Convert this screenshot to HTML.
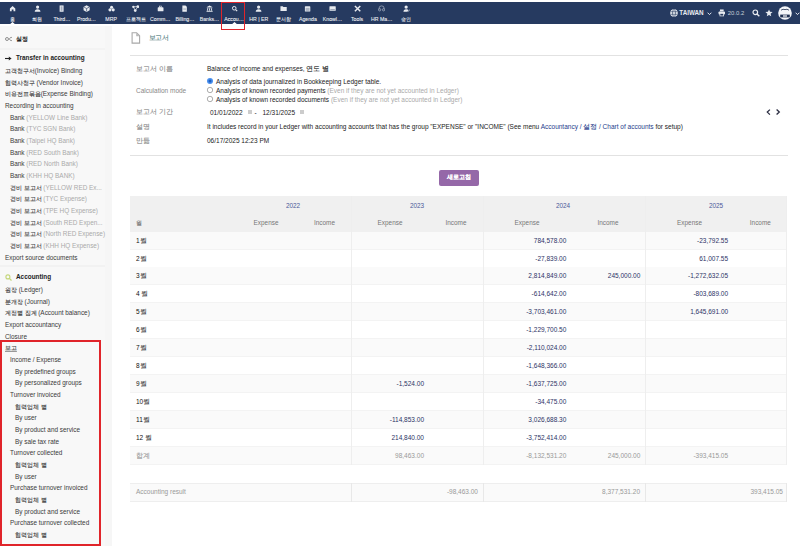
<!DOCTYPE html>
<html><head><meta charset="utf-8">
<style>
*{box-sizing:border-box;margin:0;padding:0}
html,body{width:800px;height:546px;overflow:hidden;background:#fff;font-family:"Liberation Sans",sans-serif;color:#333}
#top{position:absolute;left:0;top:2px;width:800px;height:21.8px;background:#263a60}
.mi{position:absolute;top:0;width:24.6px;height:22px;text-align:center}
.mi svg{position:absolute;left:50%;top:3.4px;margin-left:-3.6px;width:7.2px;height:7.2px}
.mi>span{position:absolute;left:-4px;right:-4px;top:13.9px;font-size:5.2px;line-height:6px;white-space:nowrap;color:#eef1f5;-webkit-text-stroke:.08px #eef1f5}
.k{font-size:1em;letter-spacing:-.01em;-webkit-text-stroke:.1px currentColor} .b .k{-webkit-text-stroke:0}
#side{position:absolute;left:0;top:26px;width:111.7px;height:520px;background:#f8f8f8}
.si{position:absolute;font-size:6.4px;line-height:8px;white-space:nowrap;color:#3a3a3a}
.si.b{font-weight:bold;color:#222}
.si .g{color:#aaa}
.ic{display:inline-block;width:11px;font-weight:normal;color:#555}
.ic2{display:inline-block;width:11px;font-size:6px;color:#9a3}
.lbl{position:absolute;left:136px;font-size:6.5px;color:#888;line-height:8px;white-space:nowrap}
.val{position:absolute;left:207px;font-size:6.5px;color:#222;line-height:8px;white-space:nowrap}
.val .g{color:#aaa}
.lnk{color:#263c8c}
.th{position:absolute;font-size:6.4px;line-height:8px;color:#777;white-space:nowrap}
.th.y{color:#4a5a9a;text-align:center}
.td{position:absolute;font-size:6.5px;line-height:8px;white-space:nowrap;color:#222}
.td.b{color:#111}
.td.n{color:#2c3366}
.td.bb{}
.td.g{color:#999}
.rad{position:absolute;left:207.5px;width:5.6px;height:5.6px;border-radius:50%;border:.6px solid #777;background:#fff}
.rad.on{border:1.6px solid #2a7ae0;background:#fff}
.btn{position:absolute;left:439px;top:170px;width:39.5px;height:15.5px;background:#9568a8;border-radius:2px;color:#fff;font-weight:bold;font-size:5.9px;line-height:15.5px;text-align:center}
</style></head><body>
<div id="side"></div><div style="position:absolute;left:104.5px;top:26px;width:7.2px;height:520px;background:#f6f6f6"></div><div style="position:absolute;left:0;top:48px;width:104.5px;height:1.5px;background:#f3f3f3"></div><div style="position:absolute;left:0;top:265.3px;width:104.5px;height:2px;background:#f2f2f2"></div>
<svg style="position:absolute;left:4.5px;top:36px" width="8" height="6" viewBox="0 0 8 6"><circle cx="2" cy="3" r="1.5" fill="none" stroke="#777" stroke-width=".8"/><path d="M7 1.6 A1.6 1.6 0 1 0 7 4.4" fill="none" stroke="#777" stroke-width=".8"/></svg>
<svg style="position:absolute;left:4.5px;top:55.5px" width="7" height="5" viewBox="0 0 7 5"><path d="M0 2.5 H4.5" stroke="#222" stroke-width="1.1"/><path d="M3.8 .6 L6.6 2.5 L3.8 4.4Z" fill="#222"/></svg>
<svg style="position:absolute;left:4.5px;top:273.5px" width="7" height="7" viewBox="0 0 7 7"><circle cx="2.9" cy="2.9" r="2" fill="none" stroke="#c4d67a" stroke-width="1.1"/><path d="M4.4 4.4 L6.5 6.5" stroke="#c4d67a" stroke-width="1.3"/></svg>
<div id="top"><div class="mi" style="left:0.40px"><svg viewBox="0 0 8 8"><path d="M1 4 L4 1 L7 4 V7 H5 V5 H3 V7 H1 Z" fill="#e8ebf0"/></svg><span><span class="k">홈</span></span></div><div class="mi" style="left:25.00px"><svg viewBox="0 0 8 8"><circle cx="4" cy="2.3" r="1.8" fill="#e8ebf0"/><path d="M0.8 7.5 Q0.8 4.6 4 4.6 Q7.2 4.6 7.2 7.5Z" fill="#e8ebf0"/></svg><span><span class="k">회원</span></span></div><div class="mi" style="left:49.60px"><svg viewBox="0 0 8 8"><rect x="1.8" y="0.5" width="4.4" height="7" fill="#e8ebf0"/><rect x="3" y="1.5" width="2" height="5" fill="#263a60" opacity=".35"/></svg><span>Third…</span></div><div class="mi" style="left:74.20px"><svg viewBox="0 0 8 8"><path d="M4 .3 L7.4 2.1 V5.9 L4 7.7 L.6 5.9 V2.1Z" fill="#e8ebf0"/><path d="M1.2 2.4 L4 3.9 L6.8 2.4 M4 3.9 V7.2" stroke="#263a60" stroke-width=".7" fill="none"/></svg><span>Produ…</span></div><div class="mi" style="left:98.80px"><svg viewBox="0 0 8 8"><circle cx="4" cy="2.4" r="1.7" fill="#e8ebf0"/><circle cx="2.2" cy="5.4" r="1.7" fill="#e8ebf0"/><circle cx="5.8" cy="5.4" r="1.7" fill="#e8ebf0"/></svg><span>MRP</span></div><div class="mi" style="left:123.40px"><svg viewBox="0 0 8 8"><circle cx="1.5" cy="2" r="1.3" fill="#e8ebf0"/><circle cx="6.5" cy="1.8" r="1.5" fill="#e8ebf0"/><circle cx="3.6" cy="6.2" r="1.5" fill="#e8ebf0"/><path d="M1.5 2 L6.5 1.8 L3.6 6.2Z" stroke="#e8ebf0" stroke-width=".8" fill="none"/></svg><span><span class="k">프로젝트</span></span></div><div class="mi" style="left:148.00px"><svg viewBox="0 0 8 8"><rect x="0.8" y="2.5" width="6.4" height="4.5" rx=".7" fill="#e8ebf0"/><rect x="2.8" y="1.2" width="2.4" height="1.6" fill="none" stroke="#e8ebf0" stroke-width=".7"/></svg><span>Comm…</span></div><div class="mi" style="left:172.60px"><svg viewBox="0 0 8 8"><path d="M1.5 0.5 H5 L6.5 2 V7.5 H1.5Z" fill="#e8ebf0"/><rect x="2.5" y="4" width="3" height="1" fill="#263a60" opacity=".4"/></svg><span>Billing…</span></div><div class="mi" style="left:197.20px"><svg viewBox="0 0 8 8"><path d="M0.5 2.5 L4 0.5 L7.5 2.5Z M1 3 H7 V3.6 H1Z M1.3 4 H2.3 V6.2 H1.3Z M3.5 4 H4.5 V6.2 H3.5Z M5.7 4 H6.7 V6.2 H5.7Z M0.6 6.5 H7.4 V7.5 H0.6Z" fill="#e8ebf0"/></svg><span>Banks…</span></div><div class="mi" style="left:221.80px"><svg viewBox="0 0 8 8"><circle cx="3.6" cy="3.6" r="2" fill="none" stroke="#e8ebf0" stroke-width="1.1"/><path d="M5.1 5.1 L6.9 6.9" stroke="#e8ebf0" stroke-width="1.3"/></svg><span>Accou…</span></div><div class="mi" style="left:246.40px"><svg viewBox="0 0 8 8"><circle cx="4" cy="2.3" r="1.8" fill="#e8ebf0"/><path d="M0.8 7.5 Q0.8 4.6 4 4.6 Q7.2 4.6 7.2 7.5Z" fill="#e8ebf0"/></svg><span>HR | ER</span></div><div class="mi" style="left:271.00px"><svg viewBox="0 0 8 8"><path d="M0.5 1.5 H3 L3.8 2.3 H7.5 V6.8 H0.5Z" fill="#e8ebf0"/></svg><span><span class="k">문서함</span></span></div><div class="mi" style="left:295.60px"><svg viewBox="0 0 8 8"><rect x="1" y="1.3" width="6" height="6" rx=".6" fill="#e8ebf0"/><rect x="1.8" y="3.2" width="4.4" height="3.4" fill="#263a60" opacity=".3"/></svg><span>Agenda</span></div><div class="mi" style="left:320.20px"><svg viewBox="0 0 8 8"><rect x="0.5" y="1.5" width="7" height="5" rx=".5" fill="#e8ebf0"/><rect x="1.5" y="4.6" width="5" height=".8" fill="#263a60" opacity=".5"/></svg><span>Knowl…</span></div><div class="mi" style="left:344.80px"><svg viewBox="0 0 8 8"><path d="M1 1 L7 7 M7 1 L1 7" stroke="#e8ebf0" stroke-width="1.6"/></svg><span>Tools</span></div><div class="mi" style="left:369.40px"><svg viewBox="0 0 8 8"><path d="M1.2 5 V3.5 Q1.2 1 4 1 Q6.8 1 6.8 3.5 V5" fill="none" stroke="#aab3c4" stroke-width=".8"/><circle cx="1.8" cy="5.3" r="1.3" fill="none" stroke="#aab3c4" stroke-width=".8"/><circle cx="6.2" cy="5.3" r="1.3" fill="none" stroke="#aab3c4" stroke-width=".8"/></svg><span>HR Ma…</span></div><div class="mi" style="left:394.00px"><svg viewBox="0 0 8 8"><circle cx="3.5" cy="2.3" r="1.8" fill="#e8ebf0"/><path d="M0.5 7.5 Q0.5 4.6 3.5 4.6 Q5.5 4.6 6 5.5 L5 7.5Z" fill="#e8ebf0"/><path d="M5 6 L6 7 L7.6 5" stroke="#e8ebf0" stroke-width=".7" fill="none"/></svg><span><span class="k">승인</span></span></div></div>
<svg style="position:absolute;left:669.8px;top:9px" width="8" height="8" viewBox="0 0 8 8"><circle cx="4" cy="4" r="3.8" fill="#e8ebf0"/><ellipse cx="4" cy="4" rx="1.5" ry="3.5" fill="none" stroke="#263a60" stroke-width=".6"/><path d="M.5 2.7 H7.5 M.5 5.3 H7.5" stroke="#263a60" stroke-width=".6"/></svg><div style="position:absolute;left:679.3px;top:9.3px;font-size:6.3px;line-height:7px;font-weight:bold;color:#e8ebf0">TAIWAN</div><svg style="position:absolute;left:706.5px;top:12px" width="5" height="3.5" viewBox="0 0 5 3.5"><path d="M.6 .7 L2.5 2.6 L4.4 .7" fill="none" stroke="#e8ebf0" stroke-width="1"/></svg><svg style="position:absolute;left:717.5px;top:9.2px" width="7.6" height="7.4" viewBox="0 0 8 8"><rect x="2" y=".5" width="4" height="2" fill="#e8ebf0"/><rect x=".5" y="2.8" width="7" height="3.2" rx=".8" fill="#e8ebf0"/><rect x="2" y="4.8" width="4" height="2.7" fill="#263a60" stroke="#e8ebf0" stroke-width=".8"/></svg><div style="position:absolute;left:727.8px;top:9.6px;font-size:5.9px;line-height:7px;color:#c9cfd9">20.0.2</div><svg style="position:absolute;left:751.5px;top:8.5px" width="8" height="8" viewBox="0 0 8 8"><circle cx="3.3" cy="3.3" r="2.3" fill="none" stroke="#e8ebf0" stroke-width="1.2"/><path d="M5 5 L7.3 7.3" stroke="#e8ebf0" stroke-width="1.4"/></svg><svg style="position:absolute;left:764.5px;top:8.5px" width="8" height="8" viewBox="0 0 10 10"><path d="M5 .5 L6.3 3.5 L9.5 3.7 L7 5.8 L7.8 9.2 L5 7.4 L2.2 9.2 L3 5.8 L.5 3.7 L3.7 3.5Z" fill="#e8ebf0"/></svg><svg style="position:absolute;left:778px;top:6.2px" width="14" height="14" viewBox="0 0 14 14"><circle cx="7" cy="7" r="6.8" fill="#f4f6f9"/><path d="M3 4.2 Q5 2.6 7 3.6 Q9 2.6 11 4.2" fill="none" stroke="#4a5670" stroke-width="1"/><rect x="2.2" y="8.6" width="9.6" height="2.8" fill="#1e2f50"/><rect x="5" y="9.4" width="4" height="1.2" fill="#fff"/></svg><svg style="position:absolute;left:795px;top:11.8px" width="5" height="3.5" viewBox="0 0 5 3.5"><path d="M.6 .7 L2.5 2.6 L4.4 .7" fill="none" stroke="#e8ebf0" stroke-width="1"/></svg>
<svg style="position:absolute;left:10px;top:21.8px" width="5" height="2.2" viewBox="0 0 5 2.2"><path d="M0 2.2 L2.5 0 L5 2.2Z" fill="#fff"/></svg>
<svg style="position:absolute;left:231.5px;top:21.8px" width="5" height="2.2" viewBox="0 0 5 2.2"><path d="M0 2.2 L2.5 0 L5 2.2Z" fill="#fff"/></svg>
<div style="position:absolute;left:220.6px;top:2.1px;width:24.7px;height:27.7px;border:1.7px solid #e0242a"></div>
<div style="position:absolute;left:0;top:0"><div class="si b" style="left:5px;top:35.0px"><span class="ic"></span><span class="k">설정</span></div><div class="si b" style="left:5px;top:54.0px"><span class="ic"></span>Transfer in accounting</div><div class="si" style="left:5px;top:66.9px"><span class="k">고객청구서</span>(Invoice) Binding</div><div class="si" style="left:5px;top:78.6px"><span class="k">협력사청구</span> (Vendor Invoice)</div><div class="si" style="left:5px;top:90.2px"><span class="k">비용전표묶음</span>(Expense Binding)</div><div class="si" style="left:5px;top:101.9px">Recording in accounting</div><div class="si" style="left:10px;top:113.6px">Bank <span class="g">(YELLOW Line Bank)</span></div><div class="si" style="left:10px;top:125.3px">Bank <span class="g">(TYC SGN Bank)</span></div><div class="si" style="left:10px;top:137.0px">Bank <span class="g">(Taipei HQ Bank)</span></div><div class="si" style="left:10px;top:148.6px">Bank <span class="g">(RED South Bank)</span></div><div class="si" style="left:10px;top:160.3px">Bank <span class="g">(RED North Bank)</span></div><div class="si" style="left:10px;top:172.0px">Bank <span class="g">(KHH HQ BANK)</span></div><div class="si" style="left:10px;top:183.7px"><span class="k">경비</span> <span class="k">보고서</span> <span class="g">(YELLOW RED Ex...</span></div><div class="si" style="left:10px;top:195.3px"><span class="k">경비</span> <span class="k">보고서</span> <span class="g">(TYC Expense)</span></div><div class="si" style="left:10px;top:207.0px"><span class="k">경비</span> <span class="k">보고서</span> <span class="g">(TPE HQ Expense)</span></div><div class="si" style="left:10px;top:218.7px"><span class="k">경비</span> <span class="k">보고서</span> <span class="g">(South RED Expen...</span></div><div class="si" style="left:10px;top:230.4px"><span class="k">경비</span> <span class="k">보고서</span> <span class="g">(North RED Expense)</span></div><div class="si" style="left:10px;top:242.0px"><span class="k">경비</span> <span class="k">보고서</span> <span class="g">(KHH HQ Expense)</span></div><div class="si" style="left:5px;top:253.7px">Export source documents</div><div class="si b" style="left:5px;top:273.0px"><span class="ic"></span>Accounting</div><div class="si" style="left:5px;top:285.9px"><span class="k">원장</span> (Ledger)</div><div class="si" style="left:5px;top:297.6px"><span class="k">분개장</span> (Journal)</div><div class="si" style="left:5px;top:309.2px"><span class="k">계정별</span> <span class="k">집계</span> (Account balance)</div><div class="si" style="left:5px;top:320.9px">Export accountancy</div><div class="si" style="left:5px;top:332.6px">Closure</div><div class="si" style="left:5px;top:344.3px"><u style="text-decoration-color:#999;text-decoration-thickness:.5px"><span class="k">보고</span></u></div><div class="si" style="left:10px;top:355.9px">Income / Expense</div><div class="si" style="left:15px;top:367.6px">By predefined groups</div><div class="si" style="left:15px;top:379.3px">By personalized groups</div><div class="si" style="left:10px;top:390.9px">Turnover invoiced</div><div class="si" style="left:15px;top:402.6px"><span class="k">협력업체</span> <span class="k">별</span></div><div class="si" style="left:15px;top:414.3px">By user</div><div class="si" style="left:15px;top:425.9px">By product and service</div><div class="si" style="left:15px;top:437.6px">By sale tax rate</div><div class="si" style="left:10px;top:449.3px">Turnover collected</div><div class="si" style="left:15px;top:461.0px"><span class="k">협력업체</span> <span class="k">별</span></div><div class="si" style="left:15px;top:472.6px">By user</div><div class="si" style="left:10px;top:484.3px">Purchase turnover invoiced</div><div class="si" style="left:15px;top:496.0px"><span class="k">협력업체</span> <span class="k">별</span></div><div class="si" style="left:15px;top:507.6px">By product and service</div><div class="si" style="left:10px;top:519.3px">Purchase turnover collected</div><div class="si" style="left:15px;top:531.0px"><span class="k">협력업체</span> <span class="k">별</span></div></div>
<div style="position:absolute;left:0;top:339.5px;width:101px;height:206.5px;border:2px solid #e0242a"></div>

<svg style="position:absolute;left:130.5px;top:31.8px" width="10" height="12" viewBox="0 0 10 12"><path d="M1.1 .7 H5.6 L8.6 3.7 V11.1 H1.1Z" fill="none" stroke="#a8a8a8" stroke-width="1.1"/><path d="M5.2 .7 V4.2 H8.6Z" fill="#b8b8b8"/></svg>
<div style="position:absolute;left:148.5px;top:33.8px;font-size:6.9px;line-height:8px;color:#4f7c80"><span class="k">보고서</span></div>
<div style="position:absolute;left:130px;top:54.6px;width:658px;height:1px;background:#e2e2e2"></div><div style="position:absolute;left:129.5px;top:154.9px;width:658.5px;height:1px;background:#e2e2e2"></div>

<div class="lbl" style="top:65px"><span class="k">보고서</span> <span class="k">이름</span></div>
<div class="val" style="top:65px">Balance of income and expenses, <span class="k">연도</span> <span class="k">별</span></div>
<div class="lbl" style="top:87px">Calculation mode</div>
<svg style="position:absolute;left:206px;top:77px" width="8" height="8" viewBox="0 0 8 8"><circle cx="4" cy="4" r="3" fill="#4a90ee"/><circle cx="4" cy="4" r="1.5" fill="#1f5fc0"/></svg>
<svg style="position:absolute;left:206px;top:86px" width="8" height="8" viewBox="0 0 8 8"><circle cx="4" cy="4" r="2.7" fill="#fff" stroke="#777" stroke-width=".6"/></svg>
<svg style="position:absolute;left:206px;top:95px" width="8" height="8" viewBox="0 0 8 8"><circle cx="4" cy="4" r="2.7" fill="#fff" stroke="#777" stroke-width=".6"/></svg>
<div class="val" style="top:78px;left:216px">Analysis of data journalized in Bookkeeping Ledger table.</div>
<div class="val" style="top:87px;left:216px">Analysis of known recorded payments <span class="g">(Even if they are not yet accounted in Ledger)</span></div>
<div class="val" style="top:96px;left:216px">Analysis of known recorded documents <span class="g">(Even if they are not yet accounted in Ledger)</span></div>
<div class="lbl" style="top:108px"><span class="k">보고서</span> <span class="k">기간</span></div>
<div class="val" style="top:108.5px;left:210px">01/01/2022</div>
<div style="position:absolute;left:247.5px;top:110px;width:4px;height:4px;background:#ccc"></div>
<div class="val" style="top:108.5px;left:254.5px">-</div>
<div class="val" style="top:108.5px;left:262.5px">12/31/2025</div>
<div style="position:absolute;left:299.5px;top:110px;width:4px;height:4px;background:#ccc"></div>
<div class="lbl" style="top:122.8px"><span class="k">설명</span></div>
<div class="val" style="top:122.8px">It includes record in your Ledger with accounting accounts that has the group "EXPENSE" or "INCOME" (See menu <span class="lnk">Accountancy / <span class="k">설정</span> / Chart of accounts</span> for setup)</div>
<div class="lbl" style="top:136.8px"><span class="k">만듦</span></div>
<div class="val" style="top:136.8px">06/17/2025 12:23 PM</div>
<svg style="position:absolute;left:765px;top:108px" width="16" height="8" viewBox="0 0 16 8"><path d="M4.9 1.6 L2.3 4.1 L4.9 6.6 M11.6 1.6 L14.3 4.1 L11.6 6.6" fill="none" stroke="#2b2d42" stroke-width="1.3"/></svg>

<div class="btn"><span class="k">새로고침</span></div>
<div style="position:absolute;left:130px;top:196px;width:656.3px;height:35.6px;background:#f0f0f0"></div><div style="position:absolute;left:130px;top:231.60px;width:656.3px;height:18.02px;background:#fafafa;border-bottom:.5px solid #f3f3f3"></div><div style="position:absolute;left:130px;top:249.52px;width:656.3px;height:18.02px;background:#ffffff;border-bottom:.5px solid #f3f3f3"></div><div style="position:absolute;left:130px;top:267.44px;width:656.3px;height:18.02px;background:#fafafa;border-bottom:.5px solid #f3f3f3"></div><div style="position:absolute;left:130px;top:285.36px;width:656.3px;height:18.02px;background:#ffffff;border-bottom:.5px solid #f3f3f3"></div><div style="position:absolute;left:130px;top:303.28px;width:656.3px;height:18.02px;background:#fafafa;border-bottom:.5px solid #f3f3f3"></div><div style="position:absolute;left:130px;top:321.20px;width:656.3px;height:18.02px;background:#ffffff;border-bottom:.5px solid #f3f3f3"></div><div style="position:absolute;left:130px;top:339.12px;width:656.3px;height:18.02px;background:#fafafa;border-bottom:.5px solid #f3f3f3"></div><div style="position:absolute;left:130px;top:357.04px;width:656.3px;height:18.02px;background:#ffffff;border-bottom:.5px solid #f3f3f3"></div><div style="position:absolute;left:130px;top:374.96px;width:656.3px;height:18.02px;background:#fafafa;border-bottom:.5px solid #f3f3f3"></div><div style="position:absolute;left:130px;top:392.88px;width:656.3px;height:18.02px;background:#ffffff;border-bottom:.5px solid #f3f3f3"></div><div style="position:absolute;left:130px;top:410.80px;width:656.3px;height:18.02px;background:#fafafa;border-bottom:.5px solid #f3f3f3"></div><div style="position:absolute;left:130px;top:428.72px;width:656.3px;height:18.02px;background:#ffffff;border-bottom:.5px solid #f3f3f3"></div><div style="position:absolute;left:130px;top:446.64px;width:656.3px;height:18.02px;background:#fafafa;border-bottom:.5px solid #f3f3f3"></div><div style="position:absolute;left:351px;top:196px;width:1px;height:268.56px;background:#eeeeee"></div><div style="position:absolute;left:482.7px;top:196px;width:1px;height:268.56px;background:#eeeeee"></div><div style="position:absolute;left:644.8px;top:196px;width:1px;height:268.56px;background:#eeeeee"></div><div style="position:absolute;left:786px;top:196px;width:1px;height:268.56px;background:#eeeeee"></div><div class="th y" style="left:273px;top:202px;width:40px">2022</div><div class="th y" style="left:397px;top:202px;width:40px">2023</div><div class="th y" style="left:543px;top:202px;width:40px">2024</div><div class="th y" style="left:696px;top:202px;width:40px">2025</div><div class="th" style="left:136px;top:219px"><span class="k">월</span></div><div class="th" style="left:241.0px;top:219px;width:50px;text-align:center">Expense</div><div class="th" style="left:299.5px;top:219px;width:50px;text-align:center">Income</div><div class="th" style="left:365.0px;top:219px;width:50px;text-align:center">Expense</div><div class="th" style="left:431.0px;top:219px;width:50px;text-align:center">Income</div><div class="th" style="left:502.0px;top:219px;width:50px;text-align:center">Expense</div><div class="th" style="left:583.0px;top:219px;width:50px;text-align:center">Income</div><div class="th" style="left:664.5px;top:219px;width:50px;text-align:center">Expense</div><div class="th" style="left:735.3px;top:219px;width:50px;text-align:center">Income</div><div class="td b" style="left:136px;top:236.60px">1<span class="k">월</span></div><div class="td n" style="right:233.70px;top:236.60px">784,578.00</div><div class="td n" style="right:71.90px;top:236.60px">-23,792.55</div><div class="td b" style="left:136px;top:254.52px">2<span class="k">월</span></div><div class="td n" style="right:233.70px;top:254.52px">-27,839.00</div><div class="td n" style="right:71.90px;top:254.52px">61,007.55</div><div class="td b" style="left:136px;top:272.44px">3<span class="k">월</span></div><div class="td n" style="right:233.70px;top:272.44px">2,814,849.00</div><div class="td n" style="right:159.70px;top:272.44px">245,000.00</div><div class="td n" style="right:71.90px;top:272.44px">-1,272,632.05</div><div class="td b" style="left:136px;top:290.36px">4 <span class="k">월</span></div><div class="td n" style="right:233.70px;top:290.36px">-614,642.00</div><div class="td n" style="right:71.90px;top:290.36px">-803,689.00</div><div class="td b" style="left:136px;top:308.28px">5<span class="k">월</span></div><div class="td n" style="right:233.70px;top:308.28px">-3,703,461.00</div><div class="td n" style="right:71.90px;top:308.28px">1,645,691.00</div><div class="td b" style="left:136px;top:326.20px">6<span class="k">월</span></div><div class="td n" style="right:233.70px;top:326.20px">-1,229,700.50</div><div class="td b" style="left:136px;top:344.12px">7<span class="k">월</span></div><div class="td n" style="right:233.70px;top:344.12px">-2,110,024.00</div><div class="td b" style="left:136px;top:362.04px">8<span class="k">월</span></div><div class="td n" style="right:233.70px;top:362.04px">-1,648,366.00</div><div class="td b" style="left:136px;top:379.96px">9<span class="k">월</span></div><div class="td n" style="right:376.00px;top:379.96px">-1,524.00</div><div class="td n" style="right:233.70px;top:379.96px">-1,637,725.00</div><div class="td b" style="left:136px;top:397.88px">10<span class="k">월</span></div><div class="td n bb" style="right:233.70px;top:397.88px">-34,475.00</div><div class="td b" style="left:136px;top:415.80px">11<span class="k">월</span></div><div class="td n bb" style="right:376.00px;top:415.80px">-114,853.00</div><div class="td n bb" style="right:233.70px;top:415.80px">3,026,688.30</div><div class="td b" style="left:136px;top:433.72px">12 <span class="k">월</span></div><div class="td n bb" style="right:376.00px;top:433.72px">214,840.00</div><div class="td n bb" style="right:233.70px;top:433.72px">-3,752,414.00</div><div class="td g" style="left:136px;top:451.64px"><span class="k">합계</span></div><div class="td g" style="right:376.00px;top:451.64px">98,463.00</div><div class="td g" style="right:233.70px;top:451.64px">-8,132,531.20</div><div class="td g" style="right:159.70px;top:451.64px">245,000.00</div><div class="td g" style="right:71.90px;top:451.64px">-393,415.05</div><div style="position:absolute;left:130px;top:483px;width:656.3px;height:19px;background:#fafafa;border-top:1px solid #eee;border-bottom:1px solid #eee"></div><div style="position:absolute;left:351px;top:483px;width:1px;height:19px;background:#e8e8e8"></div><div style="position:absolute;left:482.7px;top:483px;width:1px;height:19px;background:#e8e8e8"></div><div style="position:absolute;left:644.8px;top:483px;width:1px;height:19px;background:#e8e8e8"></div><div style="position:absolute;left:786px;top:483px;width:1px;height:19px;background:#e8e8e8"></div><div class="td g" style="left:136px;top:488px">Accounting result</div><div class="td g" style="right:322px;top:488px">-98,463.00</div><div class="td g" style="right:160px;top:488px">8,377,531.20</div><div class="td g" style="right:17px;top:488px">393,415.05</div>
</body></html>
